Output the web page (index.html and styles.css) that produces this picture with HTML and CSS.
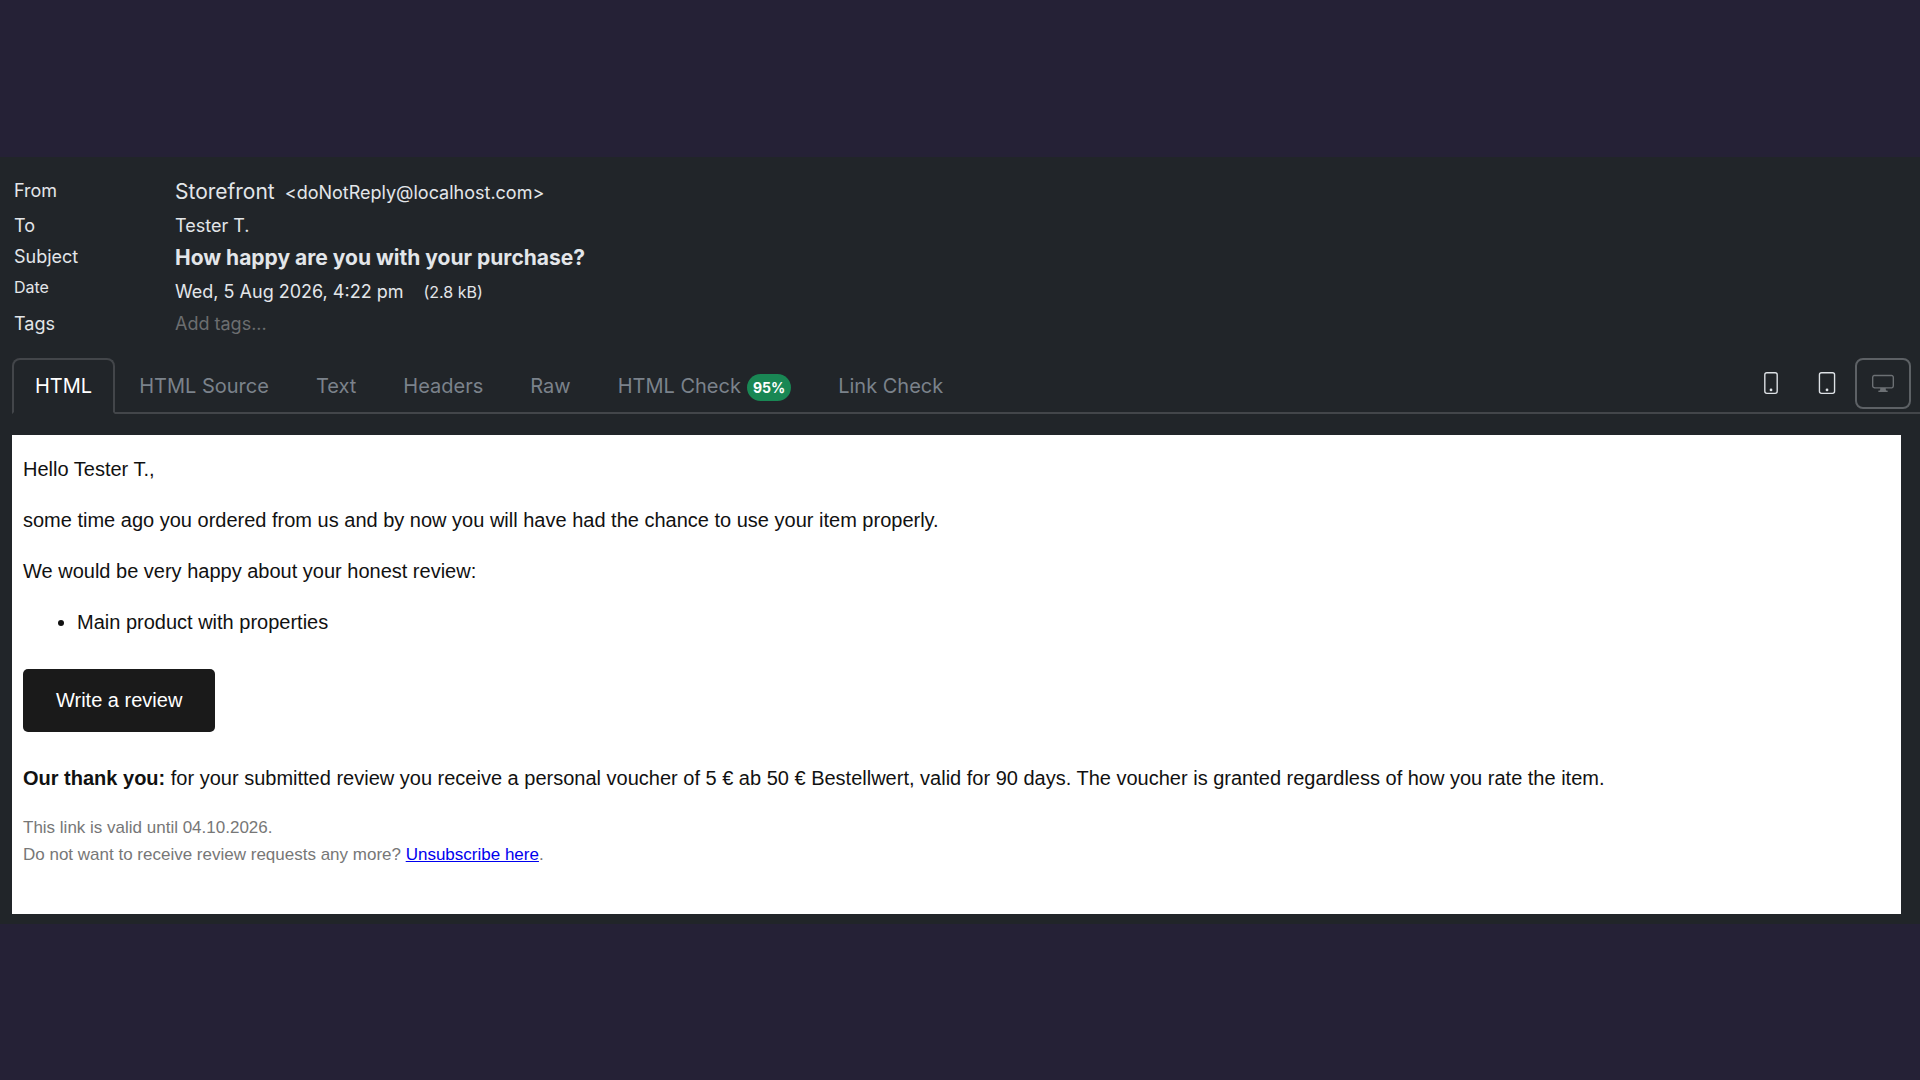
FILE: index.html
```html
<!DOCTYPE html>
<html lang="en">
<head>
<meta charset="utf-8">
<meta name="viewport" content="width=device-width, initial-scale=1">
<title>How happy are you with your purchase?</title>
<link rel="stylesheet" href="styles.css">
</head>
<body>
<main class="viewer">
  <table class="meta">
    <tbody>
      <tr class="row-large"><th scope="row">From</th><td><span class="sender">Storefront</span><span class="address">&lt;doNotReply@localhost.com&gt;</span></td></tr>
      <tr><th scope="row">To</th><td>Tester T.</td></tr>
      <tr class="row-large"><th scope="row">Subject</th><td><strong class="subject">How happy are you with your purchase?</strong></td></tr>
      <tr class="row-date"><th scope="row">Date</th><td>Wed, 5 Aug 2026, 4:22 pm<small class="size">(2.8 kB)</small></td></tr>
      <tr><th scope="row"><label for="tags">Tags</label></th><td><input class="tags" id="tags" type="text" placeholder="Add tags..."></td></tr>
    </tbody>
  </table>
  <div class="toolbar">
    <div class="tabs" role="tablist">
      <button class="tab tab-active" type="button" role="tab" aria-selected="true">HTML</button>
      <button class="tab" type="button" role="tab">HTML Source</button>
      <button class="tab" type="button" role="tab">Text</button>
      <button class="tab" type="button" role="tab">Headers</button>
      <button class="tab" type="button" role="tab">Raw</button>
      <button class="tab" type="button" role="tab">HTML Check<span class="badge">95%</span></button>
      <button class="tab" type="button" role="tab">Link Check</button>
    </div>
    <div class="devices">
      <button class="device" type="button" aria-label="Phone">
        <svg viewBox="0 0 16 16" aria-hidden="true"><path d="M11 1a1 1 0 0 1 1 1v12a1 1 0 0 1-1 1H5a1 1 0 0 1-1-1V2a1 1 0 0 1 1-1zM5 0a2 2 0 0 0-2 2v12a2 2 0 0 0 2 2h6a2 2 0 0 0 2-2V2a2 2 0 0 0-2-2z"/><path d="M8 14a1 1 0 1 0 0-2 1 1 0 0 0 0 2"/></svg>
      </button>
      <button class="device" type="button" aria-label="Tablet">
        <svg viewBox="0 0 16 16" aria-hidden="true"><path d="M12 1a1 1 0 0 1 1 1v12a1 1 0 0 1-1 1H4a1 1 0 0 1-1-1V2a1 1 0 0 1 1-1zM4 0a2 2 0 0 0-2 2v12a2 2 0 0 0 2 2h8a2 2 0 0 0 2-2V2a2 2 0 0 0-2-2z"/><path d="M8 14a1 1 0 1 0 0-2 1 1 0 0 0 0 2"/></svg>
      </button>
      <button class="device" type="button" aria-label="Desktop" disabled>
        <svg viewBox="0 0 16 16" aria-hidden="true"><path d="M0 4s0-2 2-2h12s2 0 2 2v6s0 2-2 2h-4q0 1 .25 1.5H11a.5.5 0 0 1 0 1H5a.5.5 0 0 1 0-1h.75Q6 13 6 12H2s-2 0-2-2zm1.398-.855a.76.76 0 0 0-.254.302A1.500 1.500 0 0 0 1 4.010V10c0 .325.078.502.145.602q.105.156.302.254a1.500 1.500 0 0 0 .538.143L2.010 11H14c.325 0 .502-.078.602-.145a.76.76 0 0 0 .254-.302 1.500 1.500 0 0 0 .143-.538L15 9.990V4c0-.325-.078-.502-.145-.602a.76.76 0 0 0-.302-.254A1.500 1.500 0 0 0 13.990 3H2c-.325 0-.502.078-.602.145"/></svg>
      </button>
    </div>
  </div>
  <article class="mail">
    <p>Hello Tester T.,</p>
    <p>some time ago you ordered from us and by now you will have had the chance to use your item properly.</p>
    <p>We would be very happy about your honest review:</p>
    <ul><li>Main product with properties</li></ul>
    <a class="review" href="#review">Write a review</a>
    <p><strong>Our thank you:</strong> for your submitted review you receive a personal voucher of 5 € ab 50 € Bestellwert, valid for 90 days. The voucher is granted regardless of how you rate the item.</p>
    <p class="note">This link is valid until 04.10.2026.<br>Do not want to receive review requests any more? <a href="#unsubscribe">Unsubscribe here</a>.</p>
  </article>
</main>
</body>
</html>
```
FILE: styles.css
```css
* {
  box-sizing: border-box;
}

body {
  margin: 0;
  min-height: 100vh;
  display: flex;
  flex-direction: column;
  justify-content: center;
  background: #252136;
  font-family: Inter, "Liberation Sans", sans-serif;
  color: #e3e6e9;
}

.viewer {
  padding: 18px 0 10px;
  background: #212529;
}

.meta {
  width: 100%;
  margin-bottom: 19px;
  border-collapse: collapse;
  font-size: 18px;
  line-height: 31px;
}

.meta th,
.meta td {
  padding: 0;
  vertical-align: top;
  text-align: left;
  font-weight: 400;
}

.meta th {
  width: 175px;
  padding-left: 14px;
}

.meta .row-large td {
  line-height: 34px;
}

.meta .row-date th {
  font-size: 16px;
  line-height: 22px;
}

.sender {
  margin-right: 10px;
  font-size: 21px;
}

.subject {
  font-size: 21px;
  font-weight: 700;
}

.size {
  margin-left: 20px;
  font-size: 16px;
}

.tags {
  display: block;
  width: 100%;
  height: 31px;
  padding: 0;
  border: 0;
  outline: 0;
  background: transparent;
  color: inherit;
  font: inherit;
}

.tags::placeholder {
  color: #6c6e70;
  opacity: 1;
}

.toolbar {
  display: flex;
  justify-content: space-between;
  align-items: flex-start;
  margin-left: 12px;
  padding-right: 9px;
  border-bottom: 2px solid #43464a;
}

.tabs {
  display: flex;
  gap: 1px;
  margin-bottom: -2px;
}

.tab {
  display: flex;
  align-items: center;
  height: 56px;
  padding: 0 21px;
  border: 2px solid transparent;
  background: transparent;
  color: #7b828b;
  font: 400 20px Inter, sans-serif;
}

.tab-active {
  border-color: #43464a;
  border-bottom-color: #212529;
  border-radius: 8px 8px 0 0;
  background: #212529;
  color: #fff;
}

.badge {
  margin: 4px 0 0 6px;
  padding: 0 6px;
  border-radius: 14px;
  background: #198754;
  color: #fff;
  font-size: 14px;
  font-weight: 700;
  line-height: 27px;
}

.devices {
  display: flex;
}

.device {
  display: flex;
  align-items: center;
  justify-content: center;
  width: 56px;
  height: 51px;
  padding: 0;
  border: 2px solid transparent;
  border-radius: 8px;
  background: transparent;
  color: #dee2e6;
}

.device:disabled {
  border-color: #5d6165;
  color: #6c7074;
}

.device svg {
  width: 22px;
  height: 22px;
  fill: currentColor;
}

.mail {
  margin: 21px 19px 0 12px;
  padding: 19px 11px 26px;
  background: #fff;
  color: #111;
  font-family: "Liberation Sans", Arial, sans-serif;
  font-size: 20px;
  line-height: 31px;
}

.mail p,
.mail ul {
  margin: 0 0 20px;
}

.mail ul {
  padding-left: 54px;
}

.review {
  display: inline-block;
  margin: 11px 0 31px;
  padding: 16px 33px;
  border-radius: 5px;
  background: #1a1a1a;
  color: #fff;
  text-decoration: none;
}

.mail .note {
  color: #777;
  font-size: 17px;
  line-height: 27px;
}

.note a {
  color: #00e;
}
```
